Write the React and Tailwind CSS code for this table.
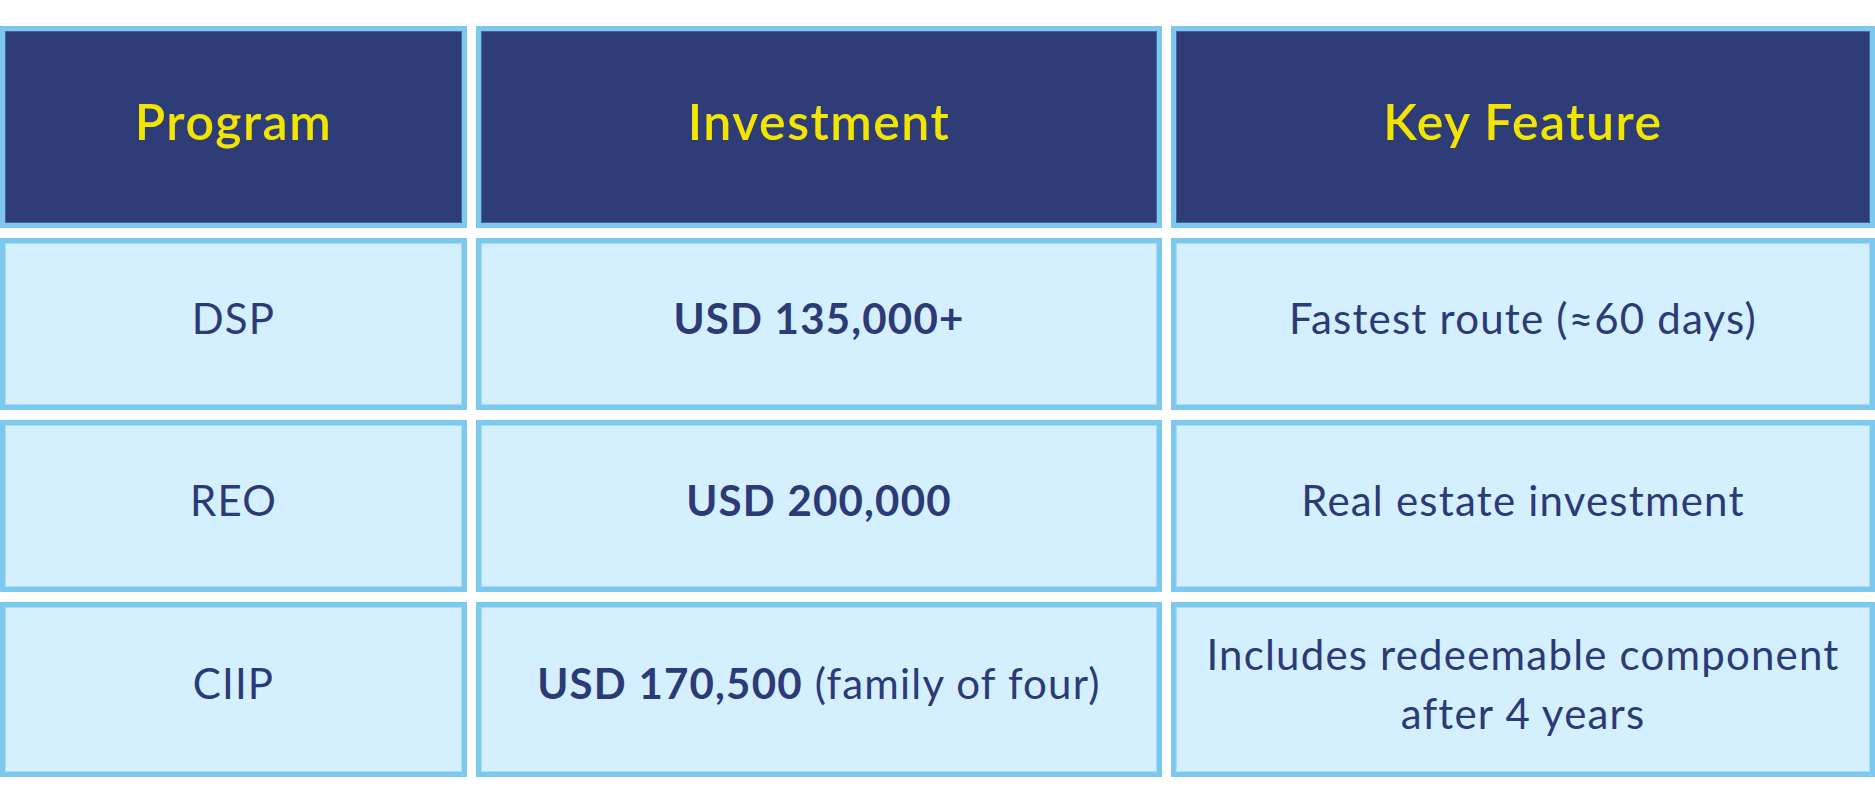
import React from 'react';

const rows = [
  { program: 'DSP', amount: 'USD 135,000+', note: '', feature: 'Fastest route (≈60 days)' },
  { program: 'REO', amount: 'USD 200,000', note: '', feature: 'Real estate investment' },
  { program: 'CIIP', amount: 'USD 170,500', note: ' (family of four)', feature: 'Includes redeemable component after 4 years' },
];

const headCell =
  'flex items-center justify-center border-[5px] border-[#7cc8ef] bg-[#2e3c78] shadow-[inset_0_0_0_1px_#4a62a6] pb-[12px] text-[50px] font-semibold tracking-[1.5px] text-[#f2e600]';
const bodyCell =
  'flex items-center justify-center border-[5px] border-[#7cc8ef] bg-[#d4effd] shadow-[inset_0_0_0_1px_#a9ddf7] px-4 pb-[12px] text-center text-[42px] leading-[59px] tracking-[1.2px] text-[#2c3a77]';

const App = () => {
  return (
    <div className="min-h-[809px] w-[1875px] bg-white pt-[26px] font-['Lato',sans-serif]">
      <div className="grid grid-cols-[467px_686px_704px] grid-rows-[202px_172px_172px_175px] gap-x-[9px] gap-y-[10px]">
        <div className={headCell}>Program</div>
        <div className={headCell}>Investment</div>
        <div className={headCell}>Key Feature</div>

        {rows.map((r) => (
          <React.Fragment key={r.program}>
            <div className={bodyCell}>{r.program}</div>
            <div className={bodyCell}>
              <span>
                <span className="font-bold">{r.amount}</span>
                {r.note}
              </span>
            </div>
            <div className={bodyCell}>{r.feature}</div>
          </React.Fragment>
        ))}
      </div>
    </div>
  );
};

export default App;
